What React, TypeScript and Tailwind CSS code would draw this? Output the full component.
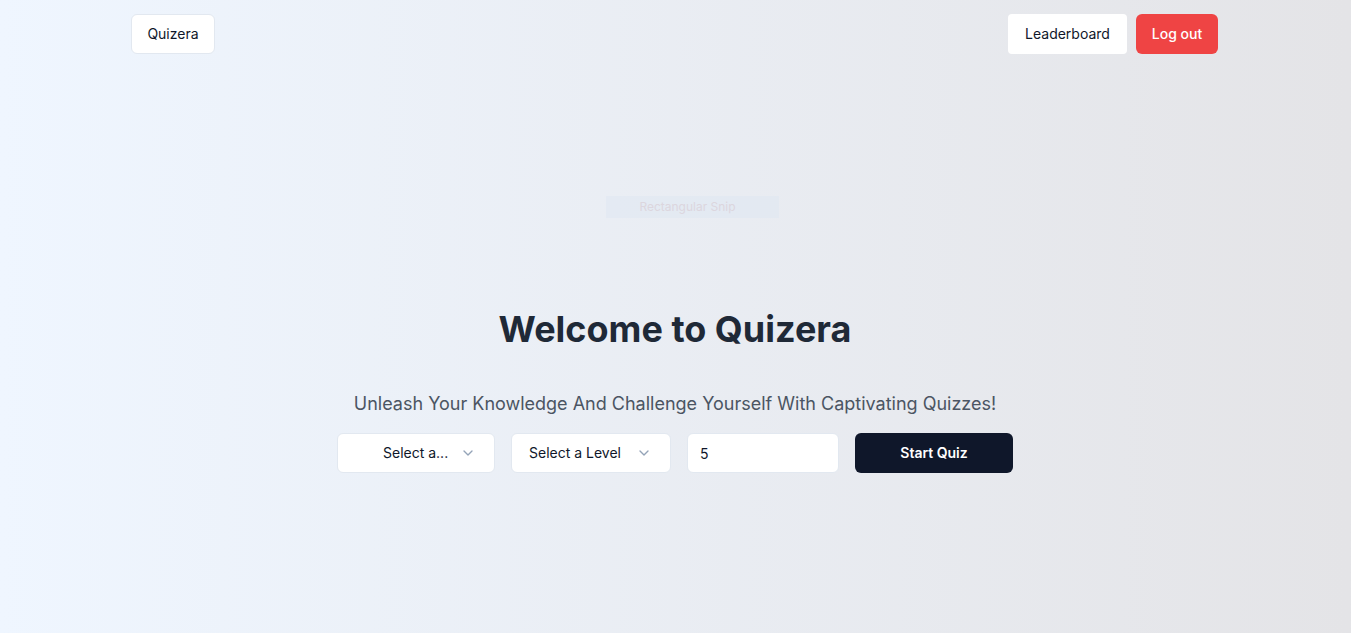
import { ChevronDown } from 'lucide-react';

const App = () => {
  return (
    <div
      className="min-h-screen w-full bg-gradient-to-r from-[#eff6ff] to-[#e4e4e7] text-[#0f172a]"
      style={{ fontFamily: 'Inter, "Noto Sans", sans-serif' }}
    >
      <div className="max-w-[1153px] mx-auto px-8">
        {/* Header */}
        <header className="flex items-center justify-between pt-[14px]">
          <button className="h-10 w-[84px] rounded-md border border-[#e2e8f0] bg-white text-sm text-[#0f172a]">
            Quizera
          </button>
          <div className="flex items-center gap-[9px] pr-[2px]">
            <button className="h-10 w-[119px] rounded-sm bg-white text-sm text-[#0f172a]">
              Leaderboard
            </button>
            <button className="h-10 w-[82px] rounded-md bg-[#ef4444] text-sm font-medium text-white">
              Log out
            </button>
          </div>
        </header>

        {/* snip tool leftover */}
        <div className="flex justify-center mt-[142px]">
          <div className="ml-[34px] w-[173px] h-[22px] bg-[#dfe7f1]/60 flex items-center justify-center pr-[10px] text-[12px] text-[#dcd6de]">
            Rectangular Snip
          </div>
        </div>

        {/* Hero */}
        <main className="flex flex-col items-center mt-[91px] pr-px">
          <h1 className="text-4xl font-bold text-[#1f2937]">Welcome to Quizera</h1>
          <p className="mt-[41px] text-lg text-[#4b5563]">
            Unleash Your Knowledge And Challenge Yourself With Captivating Quizzes!
          </p>
          <div className="mt-[15px] flex items-center gap-4">
            <button className="h-10 w-[158px] rounded-md border border-[#e2e8f0] bg-white pl-[45px] pr-[18px] flex items-center justify-between text-sm text-[#0f172a]">
              <span>Select a...</span>
              <ChevronDown className="w-4 h-4 text-[#94a3b8]" />
            </button>
            <button className="h-10 w-[160px] rounded-md border border-[#e2e8f0] bg-white pl-[17px] pr-[18px] flex items-center justify-between text-sm text-[#0f172a]">
              <span>Select a Level</span>
              <ChevronDown className="w-4 h-4 text-[#94a3b8]" />
            </button>
            <input
              type="number"
              defaultValue={5}
              className="h-10 w-[152px] rounded-md border border-[#e2e8f0] bg-white px-3 text-sm text-[#0f172a] outline-none [appearance:textfield]"
            />
            <button className="h-10 w-[158px] rounded-md bg-[#0f172a] text-sm font-semibold text-white">
              Start Quiz
            </button>
          </div>
        </main>
      </div>
    </div>
  );
};

export default App;
